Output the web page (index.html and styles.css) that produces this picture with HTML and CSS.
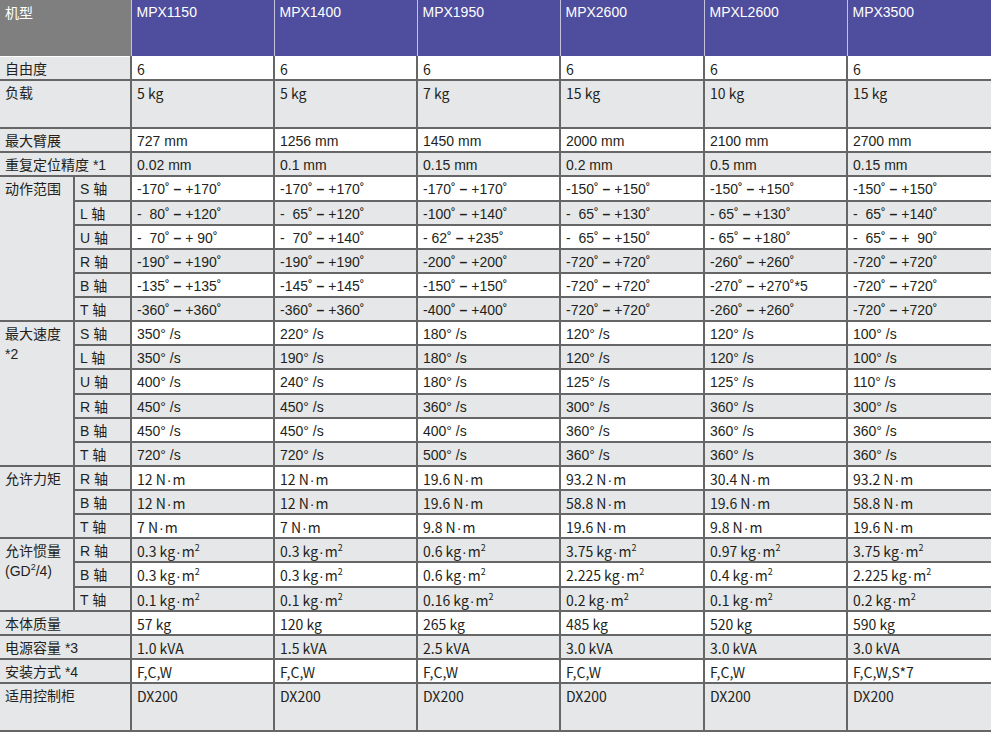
FILE: index.html
```html
<!DOCTYPE html>
<html lang="zh-CN">
<head>
<meta charset="utf-8">
<title>MPX 规格</title>
<link rel="stylesheet" href="styles.css">
</head>
<body>
<table class="spec">
  <colgroup>
    <col class="c-lab"><col class="c-axis">
    <col class="c-d1"><col class="c-d2"><col class="c-d3"><col class="c-d4"><col class="c-d5"><col class="c-d6">
  </colgroup>
  <thead>
    <tr class="r-head">
      <th class="h-model" colspan="2">机型</th>
      <th>MPX1150</th><th>MPX1400</th><th>MPX1950</th><th>MPX2600</th><th>MPXL2600</th><th>MPX3500</th>
    </tr>
  </thead>
  <tbody>
    <tr class="r n">
      <th class="lab" colspan="2">自由度</th>
      <td>6</td><td>6</td><td>6</td><td>6</td><td>6</td><td>6</td>
    </tr>
    <tr class="r-tall n alt">
      <th class="lab" colspan="2">负载</th>
      <td>5 kg</td><td>5 kg</td><td>7 kg</td><td>15 kg</td><td>10 kg</td><td>15 kg</td>
    </tr>
    <tr class="r">
      <th class="lab" colspan="2">最大臂展</th>
      <td>727 mm</td><td>1256 mm</td><td>1450 mm</td><td>2000 mm</td><td>2100 mm</td><td>2700 mm</td>
    </tr>
    <tr class="r alt">
      <th class="lab" colspan="2">重复定位精度 *1</th>
      <td>0.02 mm</td><td>0.1 mm</td><td>0.15 mm</td><td>0.2 mm</td><td>0.5 mm</td><td>0.15 mm</td>
    </tr>

    <tr class="r">
      <th class="lab" rowspan="6">动作范围</th><th class="lab">S 轴</th>
      <td>-170˚ <b>–</b> +170˚</td><td>-170˚ <b>–</b> +170˚</td><td>-170˚ <b>–</b> +170˚</td><td>-150˚ <b>–</b> +150˚</td><td>-150˚ <b>–</b> +150˚</td><td>-150˚ <b>–</b> +150˚</td>
    </tr>
    <tr class="r alt">
      <th class="lab">L 轴</th>
      <td>-  80˚ <b>–</b> +120˚</td><td>-  65˚ <b>–</b> +120˚</td><td>-100˚ <b>–</b> +140˚</td><td>-  65˚ <b>–</b> +130˚</td><td>- 65˚ <b>–</b> +130˚</td><td>-  65˚ <b>–</b> +140˚</td>
    </tr>
    <tr class="r">
      <th class="lab">U 轴</th>
      <td>-  70˚ <b>–</b> + 90˚</td><td>-  70˚ <b>–</b> +140˚</td><td>- 62˚ <b>–</b> +235˚</td><td>-  65˚ <b>–</b> +150˚</td><td>- 65˚ <b>–</b> +180˚</td><td>-  65˚ <b>–</b> +  90˚</td>
    </tr>
    <tr class="r alt">
      <th class="lab">R 轴</th>
      <td>-190˚ <b>–</b> +190˚</td><td>-190˚ <b>–</b> +190˚</td><td>-200˚ <b>–</b> +200˚</td><td>-720˚ <b>–</b> +720˚</td><td>-260˚ <b>–</b> +260˚</td><td>-720˚ <b>–</b> +720˚</td>
    </tr>
    <tr class="r">
      <th class="lab">B 轴</th>
      <td>-135˚ <b>–</b> +135˚</td><td>-145˚ <b>–</b> +145˚</td><td>-150˚ <b>–</b> +150˚</td><td>-720˚ <b>–</b> +720˚</td><td>-270˚ <b>–</b> +270˚*5</td><td>-720˚ <b>–</b> +720˚</td>
    </tr>
    <tr class="r alt">
      <th class="lab">T 轴</th>
      <td>-360˚ <b>–</b> +360˚</td><td>-360˚ <b>–</b> +360˚</td><td>-400˚ <b>–</b> +400˚</td><td>-720˚ <b>–</b> +720˚</td><td>-260˚ <b>–</b> +260˚</td><td>-720˚ <b>–</b> +720˚</td>
    </tr>

    <tr class="r">
      <th class="lab" rowspan="6">最大速度<br>*2</th><th class="lab">S 轴</th>
      <td>350° /s</td><td>220° /s</td><td>180° /s</td><td>120° /s</td><td>120° /s</td><td>100° /s</td>
    </tr>
    <tr class="r alt">
      <th class="lab">L 轴</th>
      <td>350° /s</td><td>190° /s</td><td>180° /s</td><td>120° /s</td><td>120° /s</td><td>100° /s</td>
    </tr>
    <tr class="r">
      <th class="lab">U 轴</th>
      <td>400° /s</td><td>240° /s</td><td>180° /s</td><td>125° /s</td><td>125° /s</td><td>110° /s</td>
    </tr>
    <tr class="r alt">
      <th class="lab">R 轴</th>
      <td>450° /s</td><td>450° /s</td><td>360° /s</td><td>300° /s</td><td>360° /s</td><td>300° /s</td>
    </tr>
    <tr class="r">
      <th class="lab">B 轴</th>
      <td>450° /s</td><td>450° /s</td><td>400° /s</td><td>360° /s</td><td>360° /s</td><td>360° /s</td>
    </tr>
    <tr class="r alt">
      <th class="lab">T 轴</th>
      <td>720° /s</td><td>720° /s</td><td>500° /s</td><td>360° /s</td><td>360° /s</td><td>360° /s</td>
    </tr>

    <tr class="r n">
      <th class="lab" rowspan="3">允许力矩</th><th class="lab">R 轴</th>
      <td>12 N<i>·</i>m</td><td>12 N<i>·</i>m</td><td>19.6 N<i>·</i>m</td><td>93.2 N<i>·</i>m</td><td>30.4 N<i>·</i>m</td><td>93.2 N<i>·</i>m</td>
    </tr>
    <tr class="r n alt">
      <th class="lab">B 轴</th>
      <td>12 N<i>·</i>m</td><td>12 N<i>·</i>m</td><td>19.6 N<i>·</i>m</td><td>58.8 N<i>·</i>m</td><td>19.6 N<i>·</i>m</td><td>58.8 N<i>·</i>m</td>
    </tr>
    <tr class="r n">
      <th class="lab">T 轴</th>
      <td>7 N<i>·</i>m</td><td>7 N<i>·</i>m</td><td>9.8 N<i>·</i>m</td><td>19.6 N<i>·</i>m</td><td>9.8 N<i>·</i>m</td><td>19.6 N<i>·</i>m</td>
    </tr>

    <tr class="r n alt">
      <th class="lab" rowspan="3">允许惯量<br>(GD<sup>2</sup>/4)</th><th class="lab">R 轴</th>
      <td>0.3 kg<i>·</i>m<sup>2</sup></td><td>0.3 kg<i>·</i>m<sup>2</sup></td><td>0.6 kg<i>·</i>m<sup>2</sup></td><td>3.75 kg<i>·</i>m<sup>2</sup></td><td>0.97 kg<i>·</i>m<sup>2</sup></td><td>3.75 kg<i>·</i>m<sup>2</sup></td>
    </tr>
    <tr class="r n">
      <th class="lab">B 轴</th>
      <td>0.3 kg<i>·</i>m<sup>2</sup></td><td>0.3 kg<i>·</i>m<sup>2</sup></td><td>0.6 kg<i>·</i>m<sup>2</sup></td><td>2.225 kg<i>·</i>m<sup>2</sup></td><td>0.4 kg<i>·</i>m<sup>2</sup></td><td>2.225 kg<i>·</i>m<sup>2</sup></td>
    </tr>
    <tr class="r n alt">
      <th class="lab">T 轴</th>
      <td>0.1 kg<i>·</i>m<sup>2</sup></td><td>0.1 kg<i>·</i>m<sup>2</sup></td><td>0.16 kg<i>·</i>m<sup>2</sup></td><td>0.2 kg<i>·</i>m<sup>2</sup></td><td>0.1 kg<i>·</i>m<sup>2</sup></td><td>0.2 kg<i>·</i>m<sup>2</sup></td>
    </tr>

    <tr class="r n">
      <th class="lab" colspan="2">本体质量</th>
      <td>57 kg</td><td>120 kg</td><td>265 kg</td><td>485 kg</td><td>520 kg</td><td>590 kg</td>
    </tr>
    <tr class="r n alt">
      <th class="lab" colspan="2">电源容量 *3</th>
      <td>1.0 kVA</td><td>1.5 kVA</td><td>2.5 kVA</td><td>3.0 kVA</td><td>3.0 kVA</td><td>3.0 kVA</td>
    </tr>
    <tr class="r n">
      <th class="lab" colspan="2">安装方式 *4</th>
      <td>F,C,W</td><td>F,C,W</td><td>F,C,W</td><td>F,C,W</td><td>F,C,W</td><td>F,C,W,S*7</td>
    </tr>
    <tr class="r-tall n alt">
      <th class="lab" colspan="2">适用控制柜</th>
      <td>DX200</td><td>DX200</td><td>DX200</td><td>DX200</td><td>DX200</td><td>DX200</td>
    </tr>
  </tbody>
</table>
</body>
</html>
```
FILE: styles.css
```css
html, body {
  margin: 0;
  background: #ffffff;
}

.spec {
  border-collapse: collapse;
  table-layout: fixed;
  width: 991px;
  font: 14px/20px "Liberation Sans", "Noto Sans CJK SC", sans-serif;
  color: #231f20;
}

.c-lab { width: 74px; }
.c-axis { width: 57px; }
.c-d1, .c-d2, .c-d3, .c-d5 { width: 143px; }
.c-d4, .c-d6 { width: 144px; }

.spec th,
.spec td {
  padding: 2px 5px 0;
  vertical-align: top;
  text-align: left;
  font-weight: normal;
  white-space: pre;
  overflow: hidden;
  border-right: 2px solid #666666;
  border-bottom: 2px solid #666666;
  background: #ffffff;
}

.spec td:last-child {
  border-right: none;
}

.r-head { height: 56px; }
.r { height: 24.13px; }
.r-tall { height: 48px; }

.r-head th {
  padding-top: 2px;
  color: #ffffff;
  background: #4f4d9d;
  border-right: 1px solid #c4c3dd;
  border-bottom: 1px solid #ffffff;
  font-family: "Liberation Sans", "Noto Sans CJK SC", sans-serif;
}

.r-head th:last-child { border-right: none; }

.r-head .h-model {
  background: #7f7f80;
  font-family: "Noto Sans CJK SC", sans-serif;
}

.spec .lab {
  background: #e6e7e8;
  font-family: "Liberation Sans", "Noto Sans CJK SC", sans-serif;
  white-space: normal;
}

.spec .alt td {
  background: #e6e7e8;
}

.n td {
  font-family: "Noto Sans CJK SC", sans-serif;
}

.spec b {
  font-weight: 700;
}

.spec i {
  font-style: normal;
  font-family: "Liberation Sans", sans-serif;
  line-height: 0;
  padding: 0 1px;
}

.spec sup {
  font-size: 9px;
  line-height: 0;
  vertical-align: 6px;
}
```
